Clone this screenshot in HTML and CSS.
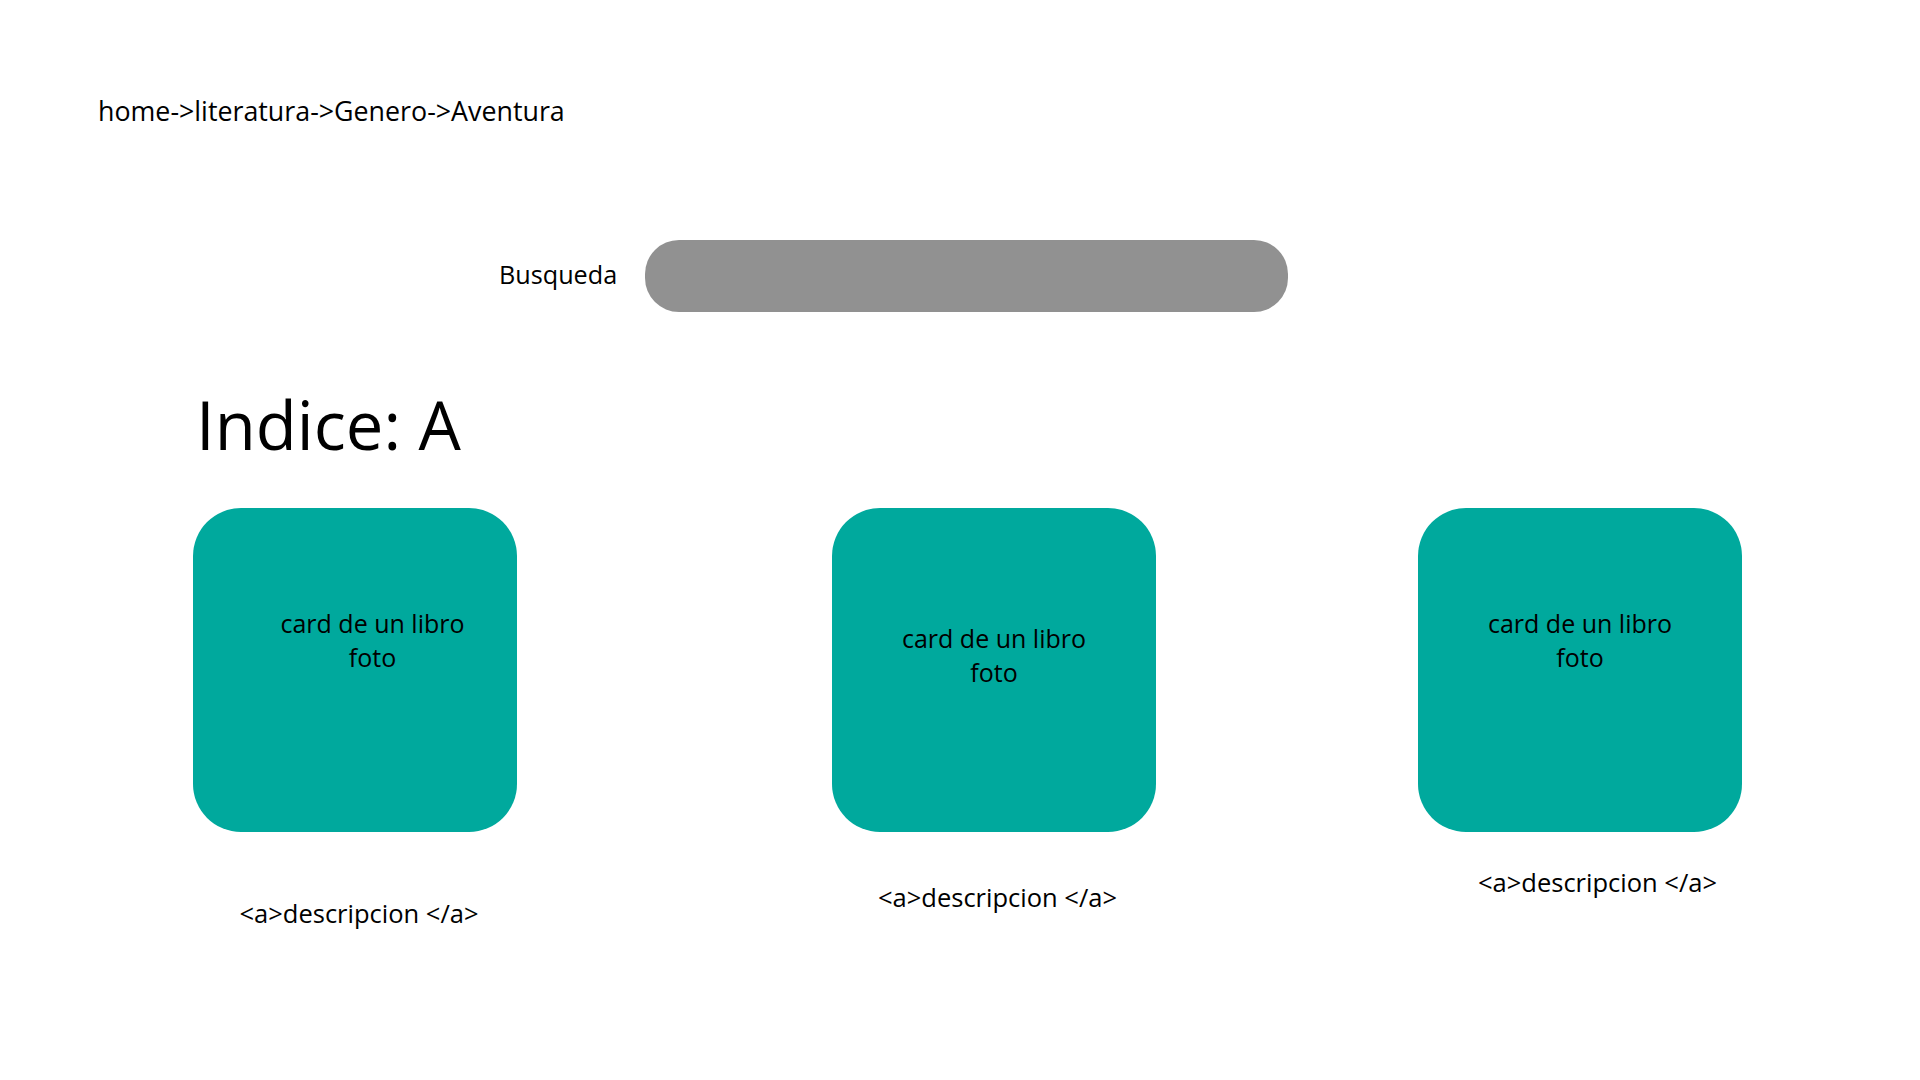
FILE: index.html
```html
<!DOCTYPE html>
<html>

<head>
    <title>Literatura - Aventura</title>
    <link rel="stylesheet" href="styles.css">
</head>

<body>
    <nav class="breadcrumb">home-&gt;literatura-&gt;Genero-&gt;Aventura</nav>

    <div class="search-row">
        <label for="search" class="search-label">Busqueda</label>
        <input type="text" id="search" class="search-input">
    </div>

    <h1 class="index-title">Indice: A</h1>

    <div class="book-list">
        <div class="book book-first">
            <div class="book-card">
                <p>card de un libro<br>foto</p>
            </div>
            <a class="book-desc">&lt;a&gt;descripcion &lt;/a&gt;</a>
        </div>

        <div class="book book-second">
            <div class="book-card">
                <p>card de un libro<br>foto</p>
            </div>
            <a class="book-desc">&lt;a&gt;descripcion &lt;/a&gt;</a>
        </div>

        <div class="book book-third">
            <div class="book-card">
                <p>card de un libro<br>foto</p>
            </div>
            <a class="book-desc">&lt;a&gt;descripcion &lt;/a&gt;</a>
        </div>
    </div>
</body>

</html>
```

FILE: styles.css
```css
:root {
    --card-color: #00a99d;
    --search-color: #919191;
    --text-color: #000;
    --bg-color: #fff;
}

* {
    box-sizing: border-box;
    margin: 0;
    padding: 0;
}

body {
    width: 1920px;
    height: 1080px;
    font-family: "Open Sans", "Noto Sans", Arial, sans-serif;
    color: var(--text-color);
    background: var(--bg-color);
    overflow: hidden;
}

.breadcrumb {
    padding: 93px 0 0 98px;
    font-size: 26.8px;
    line-height: 36px;
}

.search-row {
    display: flex;
    align-items: center;
    gap: 28px;
    margin-top: 111px;
    padding-left: 499px;
}

.search-label {
    padding-bottom: 5px;
    font-size: 25.2px;
    line-height: 34px;
}

.search-input {
    width: 643px;
    height: 72px;
    border: none;
    border-radius: 34px;
    background: var(--search-color);
    outline: none;
}

.index-title {
    margin-top: 67px;
    padding-left: 196px;
    font-size: 67px;
    font-weight: 400;
    line-height: 90px;
}

.book-list {
    display: flex;
    align-items: flex-start;
    margin-top: 39px;
    padding-left: 193px;
}

.book {
    width: 324px;
    display: flex;
    flex-direction: column;
}

.book-second {
    margin-left: 315px;
}

.book-third {
    margin-left: 262px;
}

.book-card {
    height: 324px;
    padding-top: 98px;
    border-radius: 48px;
    background: var(--card-color);
    text-align: center;
    font-size: 25px;
    line-height: 34px;
}

.book-first .book-card {
    padding-left: 35px;
}

.book-second .book-card {
    padding-top: 113px;
}

.book-desc {
    display: block;
    font-size: 25.5px;
    line-height: 34px;
    text-align: center;
    color: var(--text-color);
    text-decoration: none;
}

.book-first .book-desc {
    margin-top: 64px;
    padding-left: 8px;
}

.book-second .book-desc {
    margin-top: 48px;
    padding-left: 7px;
}

.book-third .book-desc {
    margin-top: 33px;
    padding-left: 35px;
}
```
